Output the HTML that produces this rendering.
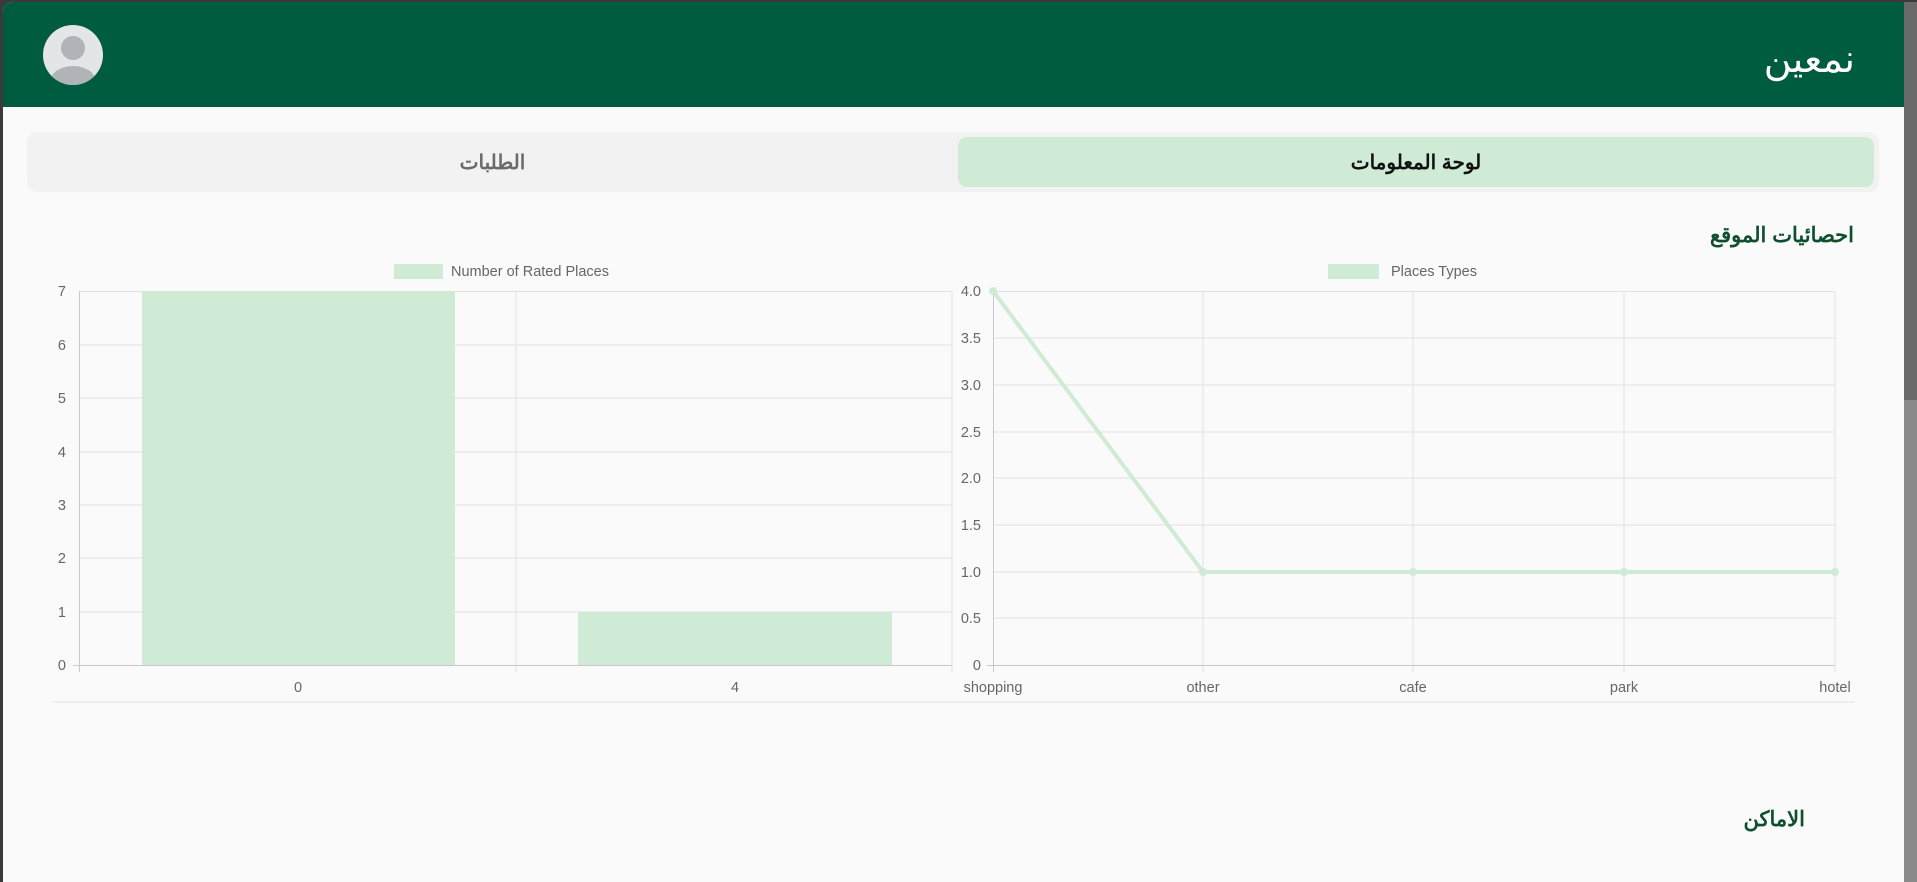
<!DOCTYPE html>
<html><head><meta charset="utf-8"><style>
html,body{margin:0;padding:0;width:1917px;height:882px;overflow:hidden;background:#3a3a3a;font-family:"Liberation Sans","Noto Sans CJK SC",sans-serif}
#win{position:absolute;left:3px;top:2px;width:1914px;height:880px;background:#fafafa;border-top-left-radius:10px;overflow:hidden}
#hdr{position:absolute;left:0;top:0;width:1914px;height:105px;background:#005c40}
.t{position:absolute;white-space:nowrap}
</style></head><body>
<div id="win">
<div id="hdr"></div>
<svg style="position:absolute;left:39px;top:22px" width="62" height="62" viewBox="0 0 62 62">
<defs><clipPath id="c"><circle cx="31" cy="31" r="30"/></clipPath></defs>
<circle cx="31" cy="31" r="30" fill="#e4e5e7"/>
<g clip-path="url(#c)" fill="#b0b3b8"><circle cx="31" cy="24" r="12"/><ellipse cx="31" cy="58" rx="23" ry="16"/></g>
</svg>
<div class="t" style="right:62px;top:26px;color:#fff;font-size:38px;font-family:'Noto Sans CJK SC',sans-serif;font-weight:200">نمعين</div>
<div style="position:absolute;left:24px;top:130px;width:1852px;height:60px;background:#f2f2f2;border-radius:10px"></div>
<div style="position:absolute;left:955px;top:135px;width:916px;height:50px;background:#cfebd6;border-radius:9px"></div>
<div class="t" style="left:955px;width:916px;top:148px;text-align:center;font-size:20px;font-weight:bold;color:#111" dir="rtl">لوحة المعلومات</div>
<div class="t" style="left:24px;width:931px;top:148px;text-align:center;font-size:20px;font-weight:bold;color:#6b6b6b" dir="rtl">الطلبات</div>
<div class="t" style="right:63px;top:221px;font-size:21px;font-weight:bold;color:#0f4f2e" dir="rtl">احصائيات الموقع</div>
<div class="t" style="right:112px;top:805px;font-size:21px;font-weight:bold;color:#0f4f2e" dir="rtl">الاماكن</div>
<svg style="position:absolute;left:-3px;top:-2px" width="1917" height="882" font-family="Liberation Sans, sans-serif" font-size="14.5" fill="#666">
<g stroke="#e2e2e2" stroke-width="1">
<line x1="79" y1="291.5" x2="952" y2="291.5"/><line x1="79" y1="345" x2="952" y2="345"/><line x1="79" y1="398" x2="952" y2="398"/><line x1="79" y1="452" x2="952" y2="452"/><line x1="79" y1="505" x2="952" y2="505"/><line x1="79" y1="558" x2="952" y2="558"/><line x1="79" y1="612" x2="952" y2="612"/>
<line x1="516" y1="291" x2="516" y2="672"/><line x1="952" y1="291" x2="952" y2="672"/>
<line x1="993" y1="291.5" x2="1835" y2="291.5"/><line x1="993" y1="338" x2="1835" y2="338"/><line x1="993" y1="385" x2="1835" y2="385"/><line x1="993" y1="432" x2="1835" y2="432"/><line x1="993" y1="478" x2="1835" y2="478"/><line x1="993" y1="525" x2="1835" y2="525"/><line x1="993" y1="572" x2="1835" y2="572"/><line x1="993" y1="618" x2="1835" y2="618"/>
<line x1="1203" y1="291" x2="1203" y2="672"/><line x1="1413" y1="291" x2="1413" y2="672"/><line x1="1624" y1="291" x2="1624" y2="672"/><line x1="1835" y1="291" x2="1835" y2="672"/>
<line x1="53" y1="702" x2="1855" y2="702"/>
</g>
<g stroke="#c8c8c8"><line x1="79.5" y1="291" x2="79.5" y2="672"/><line x1="73" y1="665.5" x2="952" y2="665.5"/><line x1="993.5" y1="291" x2="993.5" y2="672"/><line x1="987" y1="665.5" x2="1835" y2="665.5"/></g>
<rect x="142" y="291" width="313" height="374" fill="#cfebd6"/>
<rect x="578" y="612" width="314" height="53" fill="#cfebd6"/>
<polyline points="993,291 1203,572 1413,572 1624,572 1835,572" fill="none" stroke="#cfebd6" stroke-width="4"/>
<g fill="#cfebd6"><circle cx="993" cy="291" r="4"/><circle cx="1203" cy="572" r="4"/><circle cx="1413" cy="572" r="4"/><circle cx="1624" cy="572" r="4"/><circle cx="1835" cy="572" r="4"/></g>
<g text-anchor="end"><text x="66" y="296">7</text><text x="66" y="350">6</text><text x="66" y="403">5</text><text x="66" y="457">4</text><text x="66" y="510">3</text><text x="66" y="563">2</text><text x="66" y="617">1</text><text x="66" y="670">0</text>
<text x="981" y="296">4.0</text><text x="981" y="343">3.5</text><text x="981" y="390">3.0</text><text x="981" y="437">2.5</text><text x="981" y="483">2.0</text><text x="981" y="530">1.5</text><text x="981" y="577">1.0</text><text x="981" y="623">0.5</text><text x="981" y="670">0</text></g>
<g text-anchor="middle"><text x="298" y="692">0</text><text x="735" y="692">4</text><text x="993" y="692">shopping</text><text x="1203" y="692">other</text><text x="1413" y="692">cafe</text><text x="1624" y="692">park</text><text x="1835" y="692">hotel</text></g>
<rect x="394" y="264" width="49" height="15" fill="#cfebd6"/><text x="451" y="276">Number of Rated Places</text>
<rect x="1328" y="264" width="51" height="15" fill="#cfebd6"/><text x="1391" y="276">Places Types</text>
<rect x="1904" y="0" width="13" height="882" fill="#8a8a8a"/><rect x="1904" y="0" width="13" height="400" fill="#6a6a6a"/>
</svg>
</div>
</body></html>
